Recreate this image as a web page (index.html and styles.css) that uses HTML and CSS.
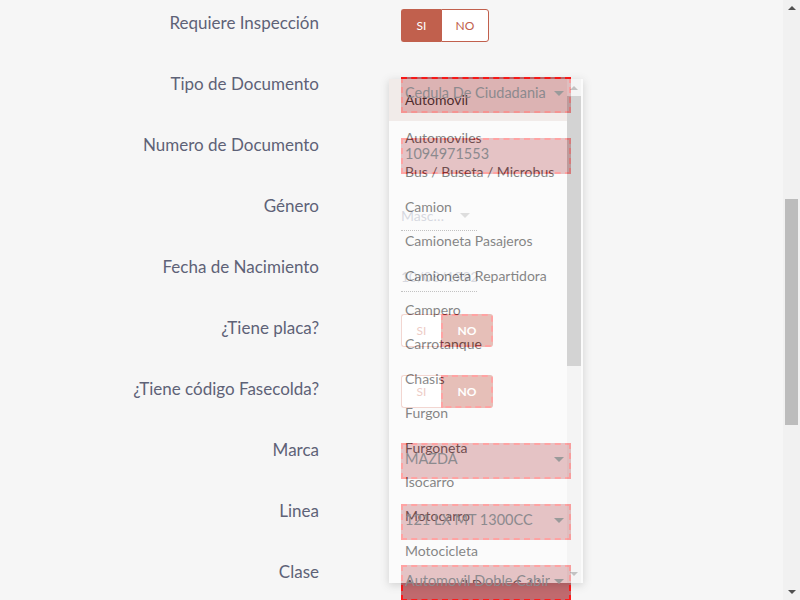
FILE: index.html
```html
<!DOCTYPE html>
<html lang="es">
<head>
<meta charset="utf-8">
<title>Formulario</title>
<link rel="stylesheet" href="styles.css">
</head>
<body>
<div class="screen">
  <main class="page">
    <form class="form">
      <div class="row">
        <label class="lbl">Requiere Inspección</label>
        <div class="field f-toggle">
          <div class="toggle"><span class="opt si on">SI</span><span class="opt no">NO</span></div>
        </div>
      </div>
      <div class="row">
        <label class="lbl">Tipo de Documento</label>
        <div class="field f-box">
          <div class="box invalid"><span class="val">Cedula De Ciudadania</span><span class="caret"></span></div>
        </div>
      </div>
      <div class="row">
        <label class="lbl">Numero de Documento</label>
        <div class="field f-box">
          <div class="box invalid"><span class="val">1094971553</span></div>
        </div>
      </div>
      <div class="row">
        <label class="lbl">Género</label>
        <div class="field f-line">
          <div class="line"><span class="lval faint">Masc…</span><span class="caret small"></span></div>
        </div>
      </div>
      <div class="row">
        <label class="lbl">Fecha de Nacimiento</label>
        <div class="field f-line">
          <div class="line"><span class="lval faint">10/08/1992</span></div>
        </div>
      </div>
      <div class="row">
        <label class="lbl">¿Tiene placa?</label>
        <div class="field f-toggle">
          <div class="toggle"><span class="opt si">SI</span><span class="opt no on invalid">NO</span></div>
        </div>
      </div>
      <div class="row">
        <label class="lbl">¿Tiene código Fasecolda?</label>
        <div class="field f-toggle">
          <div class="toggle"><span class="opt si">SI</span><span class="opt no on invalid">NO</span></div>
        </div>
      </div>
      <div class="row">
        <label class="lbl">Marca</label>
        <div class="field f-box">
          <div class="box invalid"><span class="val">MAZDA</span><span class="caret"></span></div>
        </div>
      </div>
      <div class="row">
        <label class="lbl">Linea</label>
        <div class="field f-box">
          <div class="box invalid"><span class="val">121 LX MT 1300CC</span><span class="caret"></span></div>
        </div>
      </div>
      <div class="row">
        <label class="lbl">Clase</label>
        <div class="field f-box">
          <div class="box invalid"><span class="val">Automovil Doble Cabina</span><span class="caret"></span></div>
        </div>
      </div>
    </form>

    <div class="dropdown">
      <ul class="list">
        <li class="item selected">Automovil</li>
        <li class="item">Automoviles</li>
        <li class="item">Bus / Buseta / Microbus</li>
        <li class="item">Camion</li>
        <li class="item">Camioneta Pasajeros</li>
        <li class="item">Camioneta Repartidora</li>
        <li class="item">Campero</li>
        <li class="item">Carrotanque</li>
        <li class="item">Chasis</li>
        <li class="item">Furgon</li>
        <li class="item">Furgoneta</li>
        <li class="item">Isocarro</li>
        <li class="item">Motocarro</li>
        <li class="item">Motocicleta</li>
        <li class="item">Automovil Doble Cabina</li>
      </ul>
      <div class="dsbar">
        <span class="arrow up"></span>
        <div class="dtrack"><div class="dthumb"></div></div>
        <span class="arrow down"></span>
      </div>
    </div>
  </main>
  <div class="vscroll">
    <span class="arrow up"></span>
    <div class="vtrack"><div class="vthumb"></div></div>
    <span class="arrow down"></span>
  </div>
</div>
</body>
</html>
```
FILE: styles.css
```css
* { box-sizing: border-box; }
html, body { margin: 0; padding: 0; }
body {
  background: #f6f6f6;
  font-family: "Lato", "Liberation Sans", sans-serif;
  overflow: hidden;
}
.screen {
  display: flex;
  width: 800px;
  height: 600px;
}
.page {
  position: relative;
  flex: 1;
  height: 600px;
  overflow: hidden;
}
.form { display: flex; flex-direction: column; }
.row {
  display: grid;
  grid-template-columns: 319px 1fr;
  column-gap: 82px;
  height: 61px;
  flex: none;
}
.lbl {
  text-align: right;
  padding-top: 11px;
  line-height: 24px;
  font-size: 17px;
  color: #5e6277;
}
.f-toggle { padding-top: 9px; }
.f-box { padding-top: 16px; }
.f-line { padding-top: 17px; }

.toggle {
  display: flex;
  height: 33px;
  font-size: 12px;
}
.opt {
  display: flex;
  align-items: center;
  justify-content: center;
  background: #fff;
  color: #c1604d;
  border: 1px solid #c1604d;
}
.opt.si { width: 40px; border-radius: 3px 0 0 3px; border-right: none; }
.opt.no { width: 48px; border-radius: 0 3px 3px 0; }
.opt.si:not(.on) { color: #d2806f; border-color: #e09a8c; }
.opt.on { background: #c1604d; color: #fff; }
.opt.no.on { width: 52px; font-weight: 700; border: 2px dashed #ff1a1a; }

.box {
  display: flex;
  align-items: center;
  width: 170px;
  height: 36px;
  padding: 0 2px 5px;
  font-size: 14.5px;
}
.invalid {
  background: #c06a6e;
  border: 2px dashed #ff1a1a;
}
.val {
  position: relative;
  z-index: 2;
  flex: 1;
  white-space: nowrap;
  overflow: hidden;
  color: #8c8a8e;
}
.caret {
  width: 0; height: 0;
  margin-right: 8px;
  border-left: 5px solid transparent;
  border-right: 5px solid transparent;
  border-top: 5px solid #9a9a9a;
}
.box .caret { position: relative; z-index: 2; flex: none; top: 1px; margin-right: 3px; margin-left: 4px; }
.line {
  display: flex;
  align-items: center;
  width: 76px;
  height: 31px;
  border-bottom: 1px dotted #666;
  font-size: 14px;
}
.lval { flex: 1; white-space: nowrap; overflow: hidden; }
.faint { color: #9a9fb2; }
.caret.small { margin-right: 7px; border-top-color: #aaa; }

.dropdown {
  position: absolute;
  left: 389px;
  top: 79px;
  width: 194px;
  height: 504px;
  display: flex;
  background: #fff;
  opacity: 0.6;
  box-shadow: 0 2px 8px rgba(0, 0, 0, 0.25);
  overflow: hidden;
}
.list {
  flex: 1;
  list-style: none;
  margin: 0;
  padding: 0;
  overflow: hidden;
  font-size: 14px;
  color: #3a3a3a;
}
.item {
  height: 34.4px;
  line-height: 34.4px;
  padding-left: 16px;
  white-space: nowrap;
}
.item.selected {
  height: 42px;
  line-height: 42px;
  background: #efe5e2;
  color: #000;
}
.dsbar {
  width: 14px;
  margin-right: 2px;
  display: flex;
  flex-direction: column;
  align-items: center;
  background: #f4f4f4;
}
.dsbar .arrow.up { margin: 7px 0 6px; }
.dtrack { flex: 1; width: 100%; }
.dthumb { height: 270px; background: #bcbcbc; }
.dsbar .arrow.down { margin: 7px 0 7px; }

.arrow {
  width: 0; height: 0;
  border-left: 4px solid transparent;
  border-right: 4px solid transparent;
  flex: none;
}
.arrow.up { border-bottom: 4px solid #a0a0a0; }
.arrow.down { border-top: 4px solid #a0a0a0; }

.vscroll {
  width: 17px;
  height: 600px;
  background: #f1f1f1;
  display: flex;
  flex-direction: column;
  align-items: center;
}
.vscroll .arrow.up { margin: 6px 0 7px; border-bottom-color: #505050; }
.vscroll .arrow.down { margin: 6px 0 6px; border-top-color: #505050; }
.vtrack { flex: 1; width: 100%; padding: 0 2px; }
.vthumb { margin-top: 182px; height: 226px; background: #bcbcbc; }
```
